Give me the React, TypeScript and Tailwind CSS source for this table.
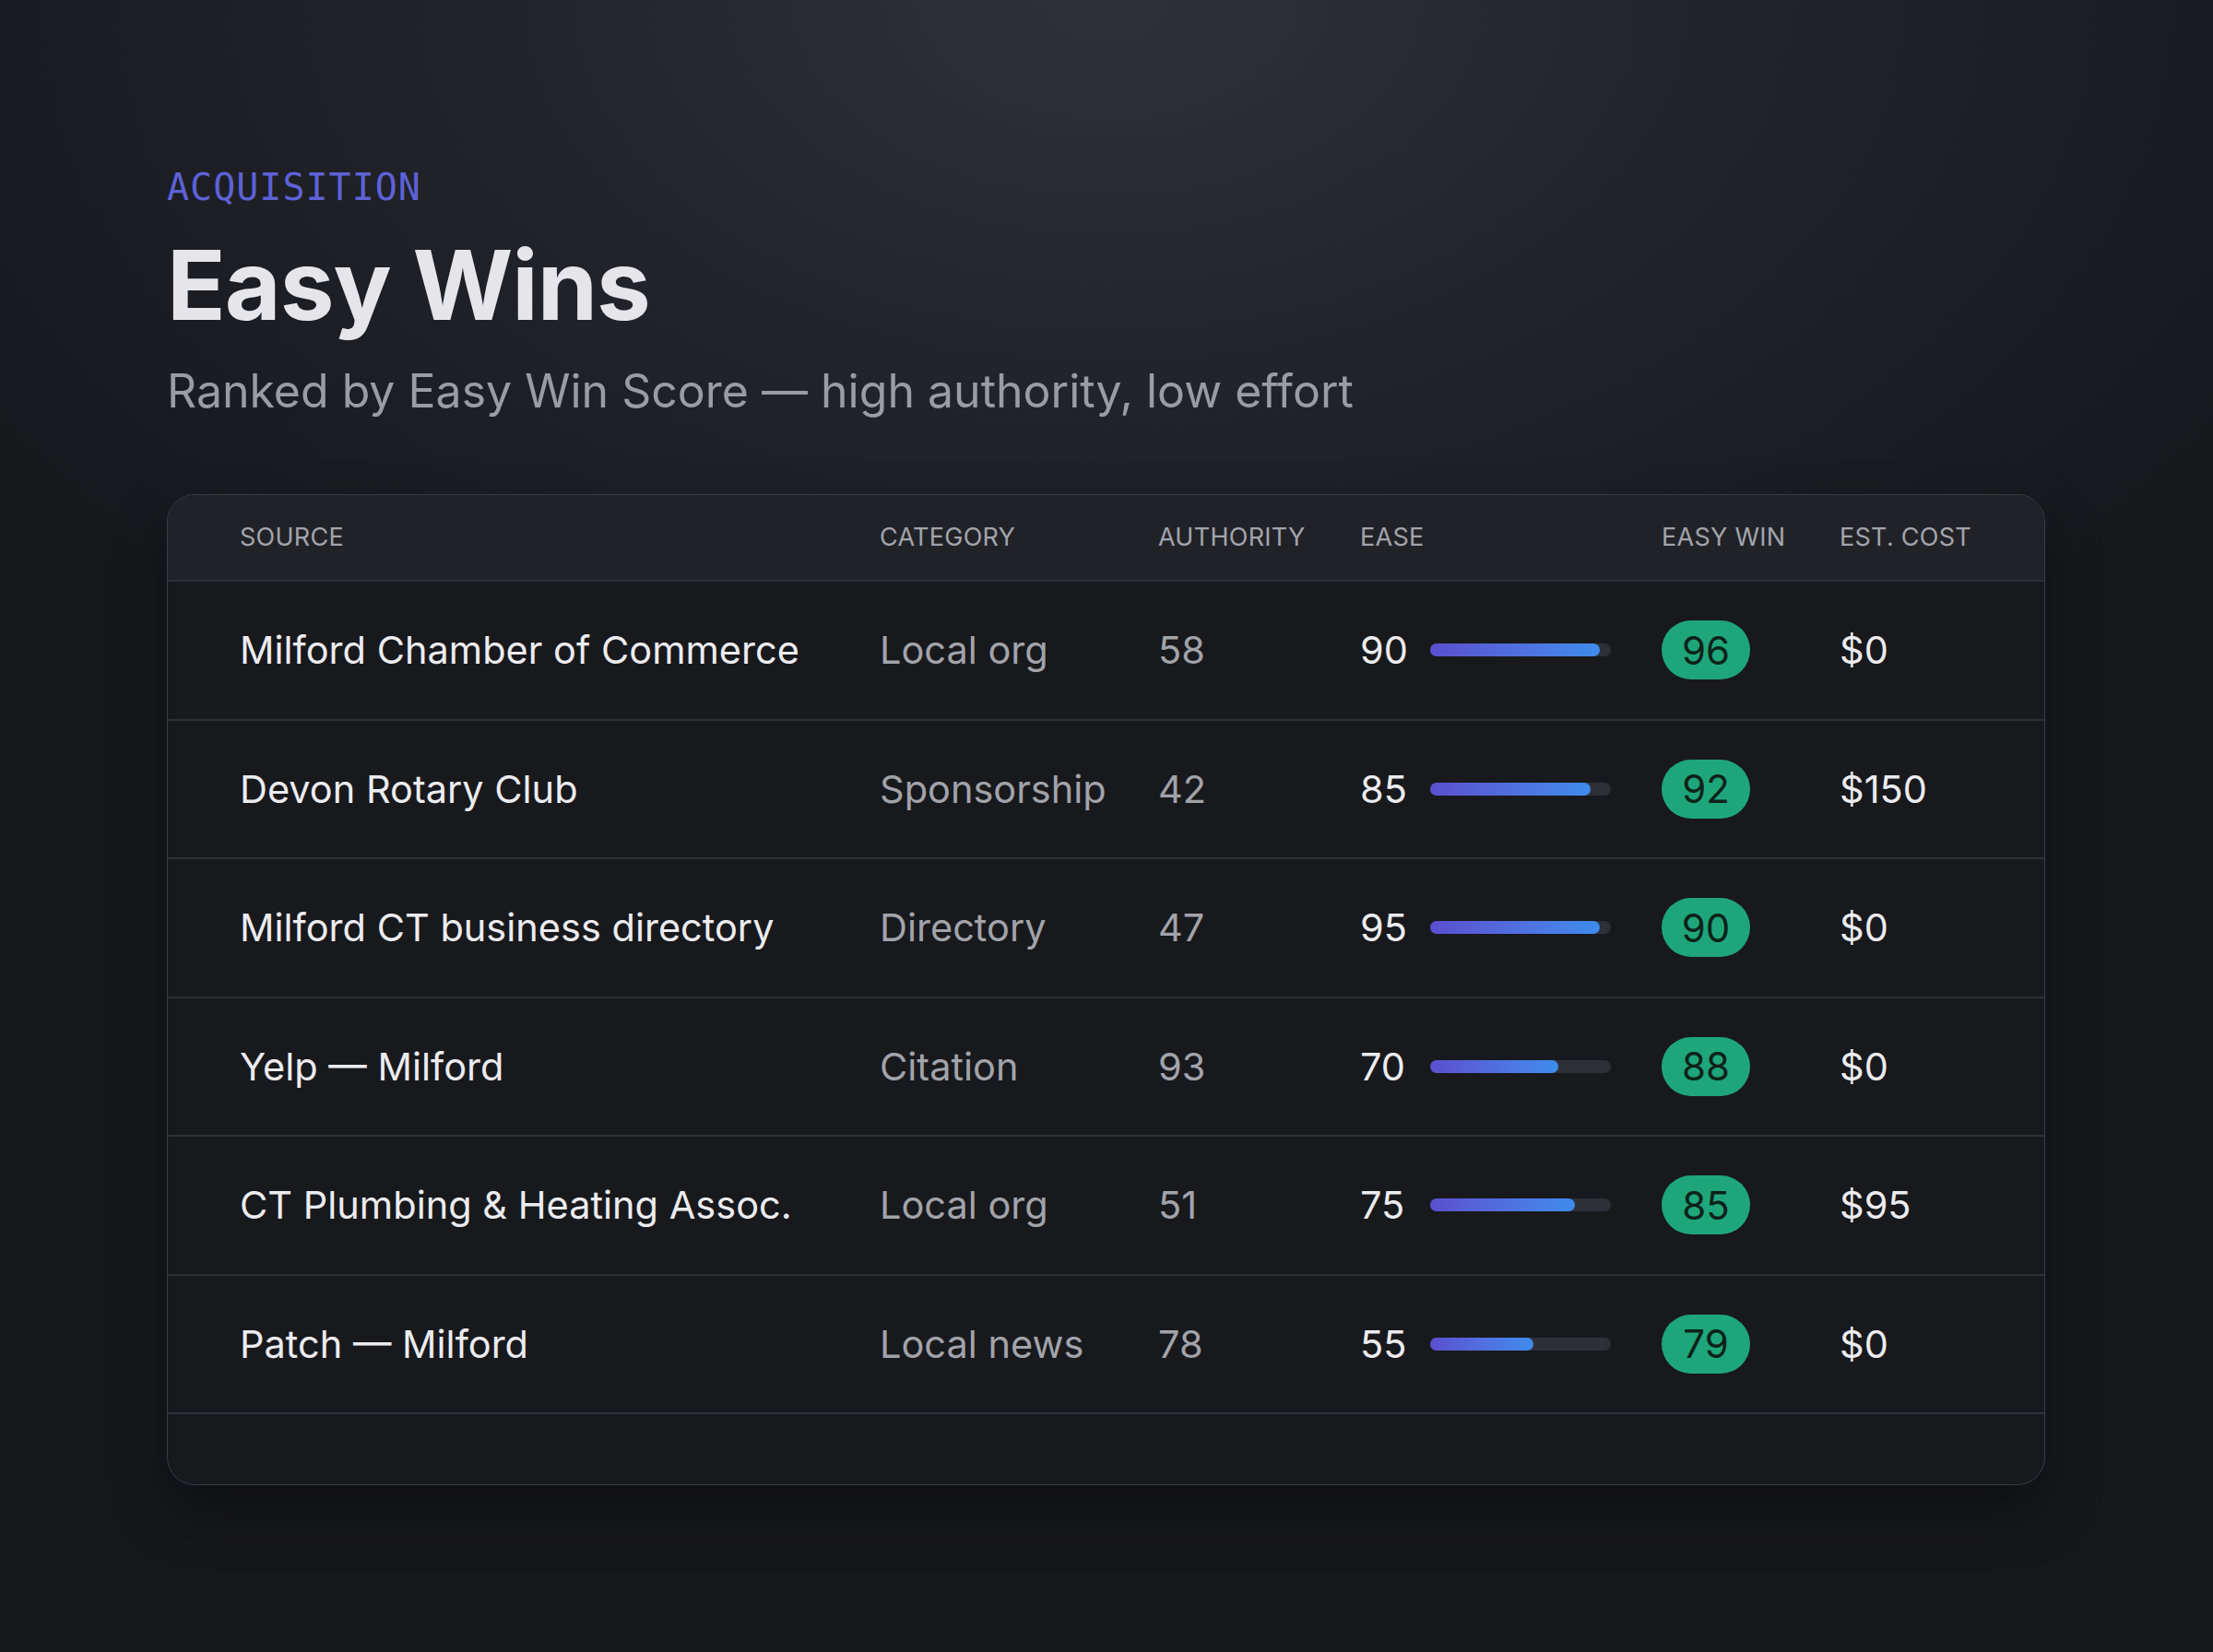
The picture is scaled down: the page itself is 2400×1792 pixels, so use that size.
import React from "react";

const rows = [
  { source: "Milford Chamber of Commerce", category: "Local org", authority: 58, ease: 90, fill: 94, win: 96, cost: "$0" },
  { source: "Devon Rotary Club", category: "Sponsorship", authority: 42, ease: 85, fill: 89, win: 92, cost: "$150" },
  { source: "Milford CT business directory", category: "Directory", authority: 47, ease: 95, fill: 94, win: 90, cost: "$0" },
  { source: "Yelp — Milford", category: "Citation", authority: 93, ease: 70, fill: 71, win: 88, cost: "$0" },
  { source: "CT Plumbing & Heating Assoc.", category: "Local org", authority: 51, ease: 75, fill: 80, win: 85, cost: "$95" },
  { source: "Patch — Milford", category: "Local news", authority: 78, ease: 55, fill: 57, win: 79, cost: "$0" },
];

const grid = "grid grid-cols-[694px_302px_219px_327px_193px_1fr] items-center px-[78px]";

export default function App() {
  return (
    <div className="min-h-[1792px] w-full bg-[#17181c] bg-[radial-gradient(ellipse_60%_50%_at_50%_0%,#2f313a_0%,#23242b_45%,#17181c_100%)] font-['Inter',sans-serif] px-[181px] pt-[183px]">
      <div className="font-['DejaVu_Sans_Mono',monospace] text-[40px] leading-none tracking-[1px] text-[#5d62d6]">ACQUISITION</div>
      <h1 className="mt-[33px] text-[105px] leading-none font-bold tracking-[-0.01em] text-[#e6e6ea]">Easy Wins</h1>
      <p className="mt-[38px] text-[50px] leading-none text-[#9b9ca3]">Ranked by Easy Win Score — high authority, low effort</p>

      <div className="mt-[87px] w-[2037px] rounded-[30px] border border-[#3a3c45] bg-[#18191d] overflow-hidden shadow-[0_30px_60px_rgba(0,0,0,0.35)]">
        <div className={`${grid} h-[92px] bg-[#212228] text-[27px] tracking-[0.01em] whitespace-nowrap text-[#a3a4ab]`}>
          <div>SOURCE</div>
          <div>CATEGORY</div>
          <div>AUTHORITY</div>
          <div>EASE</div>
          <div>EASY WIN</div>
          <div>EST. COST</div>
        </div>
        {rows.map((r) => (
          <div key={r.source} className={`${grid} h-[150.5px] border-t-2 border-[#2e3038] text-[41.5px] whitespace-nowrap`}>
            <div className="text-[#ececf0]">{r.source}</div>
            <div className="text-[#a2a3aa]">{r.category}</div>
            <div className="text-[#a2a3aa]">{r.authority}</div>
            <div className="flex items-center gap-[26px]">
              <span className="w-[50px] text-[#ececf0]">{r.ease}</span>
              <div className="h-[14px] w-[196px] rounded-full bg-[#2e3038]">
                <div
                  className="h-full rounded-full bg-gradient-to-r from-[#5a4fcf] to-[#3d8ced]"
                  style={{ width: `${r.fill}%` }}
                />
              </div>
            </div>
            <div>
              <span className="inline-flex h-[64px] w-[96px] items-center justify-center rounded-full bg-[#1ea67a] text-[42px] text-[#0e2219]">
                {r.win}
              </span>
            </div>
            <div className="text-[#ececf0]">{r.cost}</div>
          </div>
        ))}
        <div className="h-[78px] border-t-2 border-[#2e3038]" />
      </div>
    </div>
  );
}
